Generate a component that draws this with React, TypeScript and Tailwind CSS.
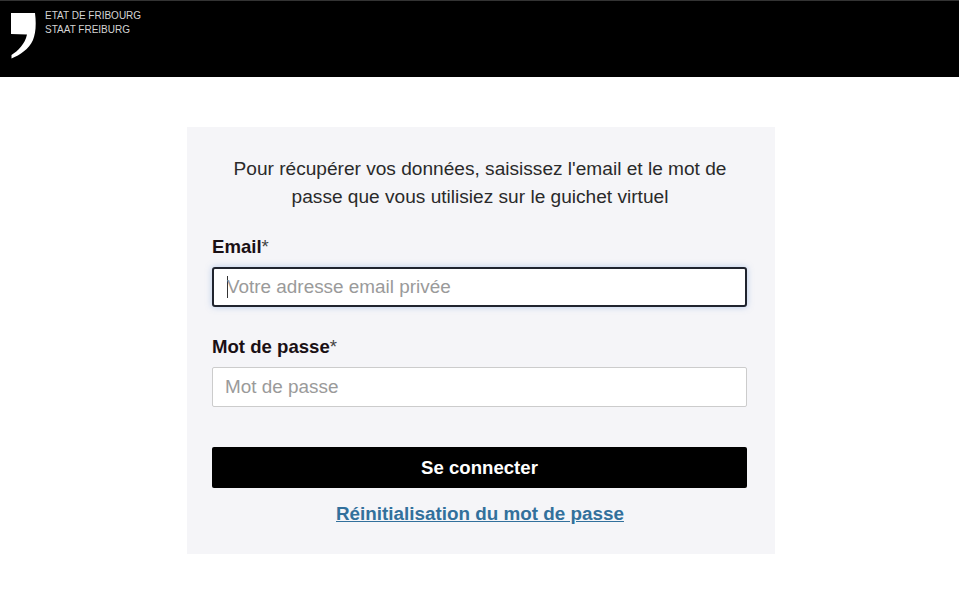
export default function App() {
  return (
    <div className="min-h-[609px] bg-white font-['Liberation_Sans',Arial,sans-serif] text-[#111]">
      <header className="h-[77px] bg-black border-t border-[#333] flex items-start pl-[10px] pt-[11px]">
        <svg width="26" height="48" viewBox="0 0 26 48" className="shrink-0">
          <path d="M1 1 L25 1 C26.5 13 25.5 22 23 28 C19 37 10 43 1.5 46.5 L1.5 43 C8 39 15 32 17 22.5 L1 22 Z" fill="#fff" />
        </svg>
        <div className="ml-[9px] -mt-[3px] text-[10px] leading-[14px] text-[#d4d4d4]">
          <div>ETAT DE FRIBOURG</div>
          <div>STAAT FREIBURG</div>
        </div>
      </header>
      <main className="flex justify-center pt-[50px]">
        <div className="w-[588px] h-[427px] bg-[#f5f5f8] px-[25px] pt-[28px] ml-[3px]">
          <p className="text-center text-[19.1px] leading-[28px] text-[#2a2a2a] pr-[16px] pl-[14px]">
            Pour récupérer vos données, saisissez l'email et le mot de passe que vous utilisiez sur le guichet virtuel
          </p>
          <form className="mt-[24px]">
            <label className="block text-[18.6px] leading-[24px] font-bold text-[#1a1014]">
              Email<span className="font-normal text-[#444]">*</span>
            </label>
            <div className="mt-[8px] h-[40px] w-[535px] rounded-[3px] border-2 border-[#20242e] bg-white flex items-center pl-[13px] text-[18.9px] text-[#9a9a9a] shadow-[0_0_6px_rgba(120,160,220,0.5)]">
              <span className="w-px h-[22px] bg-[#333] -mr-px"></span>
              Votre adresse email privée
            </div>
            <label className="block mt-[28px] text-[18.6px] leading-[24px] font-bold text-[#1a1014]">
              Mot de passe<span className="font-normal text-[#444]">*</span>
            </label>
            <input
              placeholder="Mot de passe"
              className="mt-[8px] block h-[40px] w-[535px] rounded-[2px] border border-[#ccc] bg-white pl-[12px] text-[18.9px] outline-none placeholder:text-[#9a9a9a]"
            />
            <button
              type="button"
              className="mt-[40px] block h-[41px] w-[535px] rounded-[2px] bg-black text-center text-[18.6px] font-bold text-white"
            >
              Se connecter
            </button>
            <div className="mt-[13px] pr-[2px] text-center">
              <a href="#" className="text-[18.85px] leading-[26px] font-bold text-[#32709c] underline">
                Réinitialisation du mot de passe
              </a>
            </div>
          </form>
        </div>
      </main>
    </div>
  );
}
